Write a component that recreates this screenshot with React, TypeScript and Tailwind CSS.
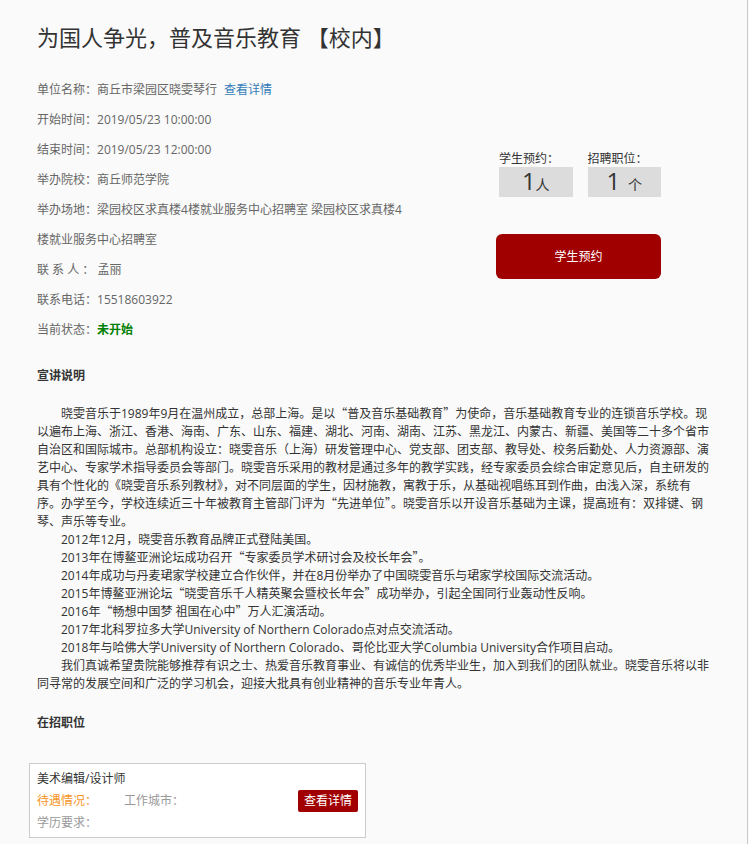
import React from "react";

const CJK = "font-['Noto_Sans_CJK_SC',sans-serif] leading-none";

function fmt(text: string) {
  const parts = text.split(/([“”])/);
  return parts.map((p, i) =>
    p === "“" || p === "”" ? (
      <span key={i} className={CJK}>
        {p}
      </span>
    ) : (
      <React.Fragment key={i}>{p}</React.Fragment>
    )
  );
}

const paragraphs = [
  "晓雯音乐于1989年9月在温州成立，总部上海。是以“普及音乐基础教育”为使命，音乐基础教育专业的连锁音乐学校。现以遍布上海、浙江、香港、海南、广东、山东、福建、湖北、河南、湖南、江苏、黑龙江、内蒙古、新疆、美国等二十多个省市自治区和国际城市。总部机构设立：晓雯音乐（上海）研发管理中心、党支部、团支部、教导处、校务后勤处、人力资源部、演艺中心、专家学术指导委员会等部门。晓雯音乐采用的教材是通过多年的教学实践，经专家委员会综合审定意见后，自主研发的具有个性化的《晓雯音乐系列教材》，对不同层面的学生，因材施教，寓教于乐，从基础视唱练耳到作曲，由浅入深，系统有序。办学至今，学校连续近三十年被教育主管部门评为“先进单位”。晓雯音乐以开设音乐基础为主课，提高班有：双排键、钢琴、声乐等专业。",
  "2012年12月，晓雯音乐教育品牌正式登陆美国。",
  "2013年在博鳌亚洲论坛成功召开“专家委员学术研讨会及校长年会”。",
  "2014年成功与丹麦珺家学校建立合作伙伴，并在8月份举办了中国晓雯音乐与珺家学校国际交流活动。",
  "2015年博鳌亚洲论坛“晓雯音乐千人精英聚会暨校长年会”成功举办，引起全国同行业轰动性反响。",
  "2016年“畅想中国梦 祖国在心中”万人汇演活动。",
  "2017年北科罗拉多大学University of Northern Colorado点对点交流活动。",
  "2018年与哈佛大学University of Northern Colorado、哥伦比亚大学Columbia University合作项目启动。",
  "我们真诚希望贵院能够推荐有识之士、热爱音乐教育事业、有诚信的优秀毕业生，加入到我们的团队就业。晓雯音乐将以非同寻常的发展空间和广泛的学习机会，迎接大批具有创业精神的音乐专业年青人。",
];

function InfoRow({ label, children }: { label: string; children: React.ReactNode }) {
  return (
    <div className="leading-[30px] text-[12px] text-[#666]">
      {label}
      {children}
    </div>
  );
}

export default function App() {
  return (
    <div className="bg-[#fafafa] min-h-screen w-full font-['Open_Sans','Noto_Sans_CJK_SC',sans-serif]">
      <div className="w-[748px] border-r border-[#c8c8c8] min-h-[844px] pt-[21px] pl-[37px] pb-[6px]">
        <h1 className="text-[22px] leading-[32px] text-[#333]">
          为国人争光，普及音乐教育 【校内】
        </h1>

        <div className="flex items-start mt-[22px]">
          <div className="w-[370px]">
            <InfoRow label="单位名称：">
              商丘市梁园区晓雯琴行
              <span className="ml-[7px] text-[#337ab7]">查看详情</span>
            </InfoRow>
            <InfoRow label="开始时间：">2019/05/23 10:00:00</InfoRow>
            <InfoRow label="结束时间：">2019/05/23 12:00:00</InfoRow>
            <InfoRow label="举办院校：">商丘师范学院</InfoRow>
            <InfoRow label="举办场地：">
              梁园校区求真楼4楼就业服务中心招聘室 梁园校区求真楼4楼就业服务中心招聘室
            </InfoRow>
            <InfoRow label="联 系 人 ：">&nbsp;孟丽</InfoRow>
            <InfoRow label="联系电话：">15518603922</InfoRow>
            <InfoRow label="当前状态：">
              <span className="font-bold text-[#008000]">未开始</span>
            </InfoRow>
          </div>

          <div className="ml-[89px] mt-[76px] w-[165px]">
            <div className="flex gap-[15px] pl-[3px]">
              <div className="w-[75px]">
                <div className="text-[12px] leading-[16px] text-[#333]">学生预约：</div>
                <div className="h-[30px] bg-[#dcdcdc] flex items-end justify-center pb-[3px] text-[#333]">
                  <span className="text-[24px] leading-[26px]">1</span>
                  <span className="text-[14px] leading-[18px]">人</span>
                </div>
              </div>
              <div className="w-[75px]">
                <div className="text-[12px] leading-[16px] text-[#333]">招聘职位：</div>
                <div className="h-[30px] bg-[#dcdcdc] flex items-end justify-center pb-[3px] text-[#333]">
                  <span className="text-[24px] leading-[26px]">1</span>
                  <span className="text-[14px] leading-[18px] ml-[8px]">个</span>
                </div>
              </div>
            </div>
            <button className="mt-[37px] w-[165px] h-[45px] rounded-[6px] bg-[#a00000] text-white text-[12px]">
              学生预约
            </button>
          </div>
        </div>

        <h3 className="mt-[22px] text-[12px] leading-[18px] font-bold text-[#333]">宣讲说明</h3>

        <div className="mt-[20px] w-[674px] text-[12px] leading-[18px] text-[#333]">
          {paragraphs.map((p, i) => (
            <p key={i} className="indent-[24px]">
              {fmt(p)}
            </p>
          ))}
        </div>

        <h3 className="mt-[21px] text-[12px] leading-[18px] font-bold text-[#333]">在招职位</h3>

        <div className="mt-[31px] -ml-[8px] w-[337px] h-[75px] border border-[#cccccc] bg-white pt-[4px] pl-[7px] pr-[7px] text-[12px] leading-[22px]">
          <div className="text-[#333]">美术编辑/设计师</div>
          <div className="flex items-center justify-between">
            <div className="flex">
              <span className="w-[87px] text-[#f7941d]">待遇情况：</span>
              <span className="text-[#999]">工作城市：</span>
            </div>
            <button className="h-[22px] w-[60px] bg-[#a00000] text-white text-[12px] rounded-[2px] leading-[22px]">
              查看详情
            </button>
          </div>
          <div className="text-[#999]">学历要求：</div>
        </div>
      </div>
    </div>
  );
}
